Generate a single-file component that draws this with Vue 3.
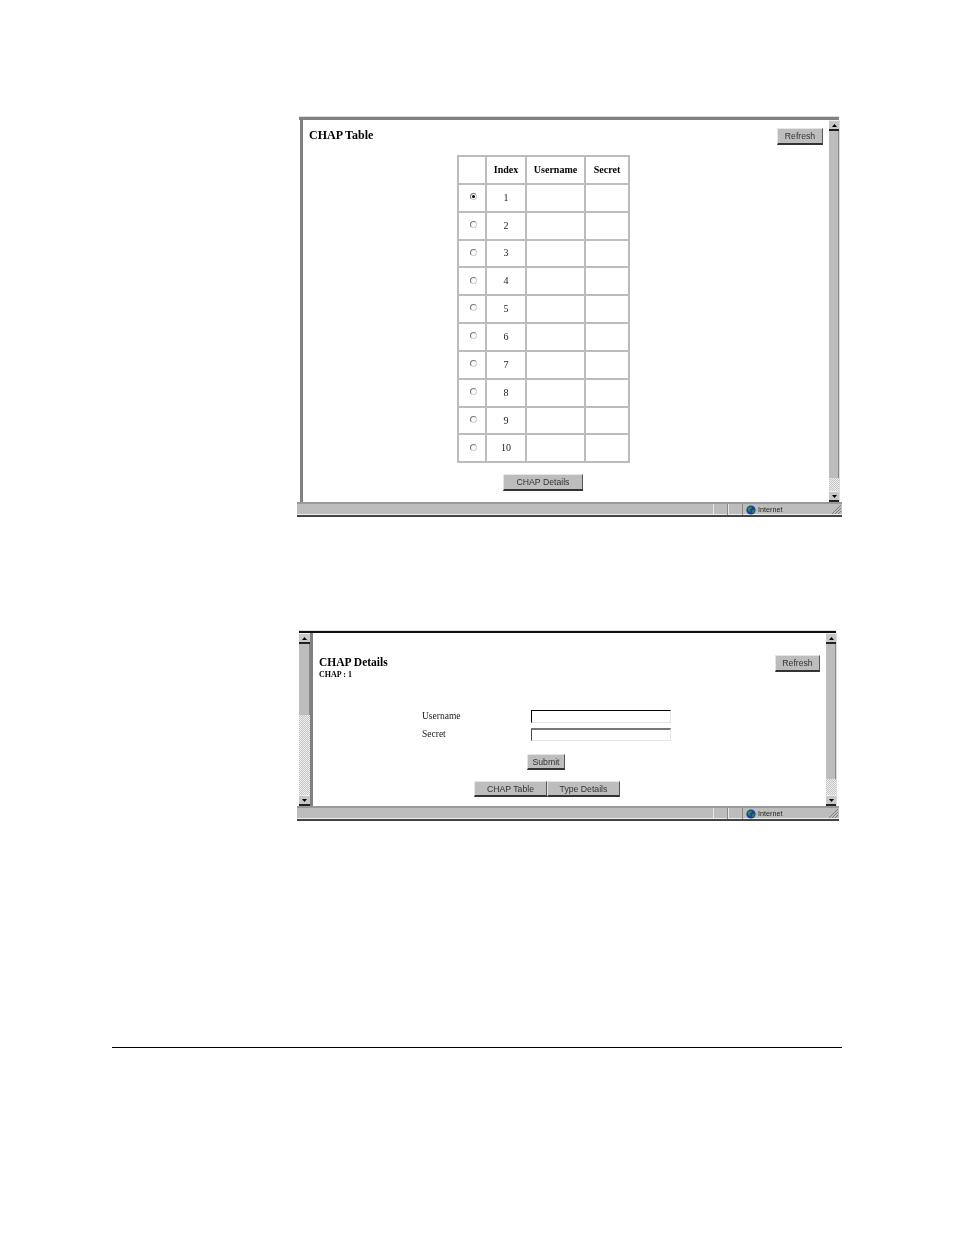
<script setup>
const rows = [1, 2, 3, 4, 5, 6, 7, 8, 9, 10]
</script>

<template>
  <div class="page">
    <section class="win first">
      <div class="top-line grey"></div>
      <div class="body">
        <div class="edge grey-edge"></div>
        <div class="content content-a">
          <div class="head">
            <h2 class="title">CHAP Table</h2>
            <button class="btn refresh">Refresh</button>
          </div>
          <div class="table-col">
            <table class="chap">
              <thead>
                <tr>
                  <th class="c1"></th>
                  <th class="c2">Index</th>
                  <th class="c3">Username</th>
                  <th class="c4">Secret</th>
                </tr>
              </thead>
              <tbody>
                <tr v-for="r in rows" :key="r">
                  <td><span class="radio" :class="{ on: r === 1 }"></span></td>
                  <td>{{ r }}</td>
                  <td></td>
                  <td></td>
                </tr>
              </tbody>
            </table>
            <button class="btn details">CHAP Details</button>
          </div>
        </div>
        <div class="bar">
          <div class="arrow"><svg width="7" height="5" viewBox="0 0 7 5"><path d="M3.5 1 6 4H1z" fill="#000"/></svg></div>
          <div class="thumb thumb-a"></div>
          <div class="dots dots-a"></div>
          <div class="arrow"><svg width="7" height="5" viewBox="0 0 7 5"><path d="M1 1h5L3.5 4z" fill="#000"/></svg></div>
        </div>
      </div>
      <div class="status">
        <div class="status-main"></div>
        <div class="cell"></div>
        <div class="cell"></div>
        <div class="zone">
          <svg width="10" height="10" viewBox="0 0 10 10"><circle cx="5" cy="5" r="4.6" fill="#1f3f9c"/><path d="M2 2.5 5 1.5 6 3 4 4.5 4.5 6.5 3 6.5 1.5 4.5zM6 5.5 8.5 5 8 7.5 6.5 8.5z" fill="#2f8f3a"/></svg>
          <span>Internet</span>
        </div>
        <svg class="grip" width="12" height="12" viewBox="0 0 12 12"><path d="M11 2 2 11M11 5 5 11M11 8 8 11" stroke="#808080" stroke-width="1"/></svg>
      </div>
    </section>

    <section class="win second">
      <div class="top-line dark"></div>
      <div class="body">
        <div class="bar left">
          <div class="arrow"><svg width="7" height="5" viewBox="0 0 7 5"><path d="M3.5 1 6 4H1z" fill="#000"/></svg></div>
          <div class="thumb thumb-b"></div>
          <div class="dots dots-b"></div>
          <div class="arrow"><svg width="7" height="5" viewBox="0 0 7 5"><path d="M1 1h5L3.5 4z" fill="#000"/></svg></div>
        </div>
        <div class="edge grey-edge narrow"></div>
        <div class="content content-b">
          <div class="head head-b">
            <div>
              <h2 class="title big">CHAP Details</h2>
              <p class="sub">CHAP : 1</p>
            </div>
            <button class="btn refresh">Refresh</button>
          </div>
          <div class="form">
            <label class="lbl">Username</label>
            <div class="input sunk"></div>
            <label class="lbl">Secret</label>
            <div class="input sunk2"></div>
          </div>
          <div class="actions">
            <button class="btn submit">Submit</button>
            <div class="pair">
              <button class="btn tab1">CHAP Table</button>
              <button class="btn tab2">Type Details</button>
            </div>
          </div>
        </div>
        <div class="bar">
          <div class="arrow"><svg width="7" height="5" viewBox="0 0 7 5"><path d="M3.5 1 6 4H1z" fill="#000"/></svg></div>
          <div class="thumb thumb-c"></div>
          <div class="dots dots-c"></div>
          <div class="arrow"><svg width="7" height="5" viewBox="0 0 7 5"><path d="M1 1h5L3.5 4z" fill="#000"/></svg></div>
        </div>
      </div>
      <div class="status">
        <div class="status-main"></div>
        <div class="cell"></div>
        <div class="cell"></div>
        <div class="zone">
          <svg width="10" height="10" viewBox="0 0 10 10"><circle cx="5" cy="5" r="4.6" fill="#1f3f9c"/><path d="M2 2.5 5 1.5 6 3 4 4.5 4.5 6.5 3 6.5 1.5 4.5zM6 5.5 8.5 5 8 7.5 6.5 8.5z" fill="#2f8f3a"/></svg>
          <span>Internet</span>
        </div>
        <svg class="grip" width="12" height="12" viewBox="0 0 12 12"><path d="M11 2 2 11M11 5 5 11M11 8 8 11" stroke="#808080" stroke-width="1"/></svg>
      </div>
    </section>

    <hr class="rule" />
  </div>
</template>

<style scoped>
.page {
  width: 954px;
  height: 1235px;
  background: #fff;
  padding-top: 116px;
  box-sizing: border-box;
  position: relative;
  overflow: hidden;
}
.win {
  margin-left: 297px;
  display: flex;
  flex-direction: column;
  box-sizing: border-box;
  filter: blur(0.3px);
}
.first { width: 545px; height: 401px; }
.second { width: 542px; height: 191px; margin-top: 113px; }
.top-line { height: 3px; margin-left: 2px; margin-right: 3px; }
.top-line.grey { height: 4px; background: #808080; border-top: 1px solid #ddd; box-sizing: border-box; }
.top-line.dark { height: 3px; background: #111; border-top: 1px solid #ddd; box-sizing: border-box; }
.body { flex: 1; display: flex; min-height: 0; padding-left: 2px; padding-right: 2px; }
.first .body { padding-left: 2.5px; }
.edge { width: 3px; background: #808080; }
.content { flex: 1; background: #fff; min-width: 0; }
.head { display: flex; justify-content: space-between; align-items: flex-start; }
.content-a .head { padding: 8px 6px 0 6.5px; height: 27px; }
.title {
  margin: 0;
  font: bold 12px/14px "Liberation Serif", serif;
  color: #000;
}
.title.big { font-size: 11.5px; }
.sub {
  margin: 1px 0 0;
  font: bold 8px/10px "Liberation Serif", serif;
  color: #000;
}
.btn {
  background: #bdbdbd;
  border: 0;
  border-top: 1px solid #e6e6e6;
  border-left: 1px solid #e6e6e6;
  border-right: 1px solid #555;
  border-bottom: 2px solid #333;
  padding: 0;
  box-sizing: border-box;
  font: 8.7px/12px "Liberation Sans", sans-serif;
  color: #333;
  text-align: center;
  display: block;
}
.refresh { width: 46px; height: 17px; }
.table-col {
  margin-left: 155.5px;
  width: 171px;
  display: flex;
  flex-direction: column;
  align-items: center;
}
.chap {
  width: 171px;
  border-collapse: collapse;
  table-layout: fixed;
  border: 1px solid #8c8c8c;
  font: 10px/12px "Liberation Serif", serif;
  color: #222;
}
.chap th, .chap td {
  border: 2px solid #bcbcbc;
  height: 25.85px;
  padding: 0;
  text-align: center;
  box-sizing: content-box;
}
.chap th { font-weight: bold; color: #000; }
.c1 { width: 26px; }
.c2 { width: 38px; }
.c3 { width: 57px; }
.c4 { width: 42px; }
.radio {
  display: inline-block;
  width: 5px;
  height: 5px;
  border-radius: 50%;
  border: 1px solid #777;
  border-right-color: #ccc;
  border-bottom-color: #ccc;
  box-sizing: content-box;
  position: relative;
  top: -2px;
  left: 1px;
  vertical-align: middle;
}
.radio.on::after {
  content: "";
  position: absolute;
  left: 1px;
  top: 1px;
  width: 3px;
  height: 3px;
  background: #000;
  border-radius: 50%;
}
.details { width: 80px; height: 17px; margin-top: 11px; margin-right: 1px; }
.bar {
  width: 11px;
  display: flex;
  flex-direction: column;
  background: #bdbdbd;
  border-right: 1px solid #ddd;
  box-sizing: border-box;
}
.bar.left { border-right: 0; }
.arrow {
  height: 11px;
  background: #c8c8c8;
  border-top: 1px solid #eee;
  border-bottom: 2px solid #222;
  display: flex;
  align-items: center;
  justify-content: center;
  box-sizing: border-box;
}
.thumb { background: #bdbdbd; border-right: 1px solid #8a8a8a; box-sizing: border-box; }
.dots {
  background: repeating-conic-gradient(#c4c4c4 0 25%, #f0f0f0 0 50%) 0 0 / 2px 2px;
}
.thumb-a { height: 347px; }
.dots-a { flex: 1; }
.thumb-b { height: 71px; }
.dots-b { flex: 1; }
.thumb-c { height: 135px; }
.dots-c { flex: 1; }
.content-b .head-b { padding: 22px 6px 0 6px; height: 53px; box-sizing: content-box; }
.head-b .refresh { width: 45px; }
.form {
  margin-left: 109px;
  margin-top: -1px;
  display: grid;
  grid-template-columns: 109px 140px;
  grid-auto-rows: 18px;
  align-items: center;
}
.lbl { font: 9.5px/12px "Liberation Serif", serif; color: #222; }
.input { height: 13px; background: #fff; box-sizing: border-box; border: 1px solid #e4e4e4; }
.sunk { border-top: 1px solid #000; border-left: 1px solid #000; }
.sunk2 { border-top: 2px solid #777; border-left: 1px solid #444; }
.actions { display: flex; flex-direction: column; align-items: center; width: 310px; margin-left: 78px; }
.submit { width: 38px; height: 16px; margin-top: 11px; }
.pair { display: flex; margin-top: 11px; margin-left: 2px; }
.tab1 { width: 73px; height: 16px; }
.tab2 { width: 73px; height: 16px; }
.status {
  height: 15px;
  background: #bdbdbd;
  border-top: 2px solid #999;
  border-bottom: 2px solid #444;
  box-sizing: border-box;
  box-shadow: inset 0 -1px 0 #eee;
  display: flex;
  align-items: stretch;
  position: relative;
}
.status-main { width: 416px; }
.cell { width: 15px; border-left: 1px solid #e8e8e8; border-right: 1px solid #888; box-sizing: border-box; }
.zone {
  display: flex;
  align-items: center;
  gap: 2px;
  padding-left: 3px;
  font: 7.2px/10px "Liberation Sans", sans-serif;
  color: #222;
}
.grip { position: absolute; right: 0; bottom: 0; }
.rule {
  position: absolute;
  left: 112px;
  top: 1047px;
  width: 730px;
  margin: 0;
  border: 0;
  height: 1px;
  background: #000;
}
</style>
